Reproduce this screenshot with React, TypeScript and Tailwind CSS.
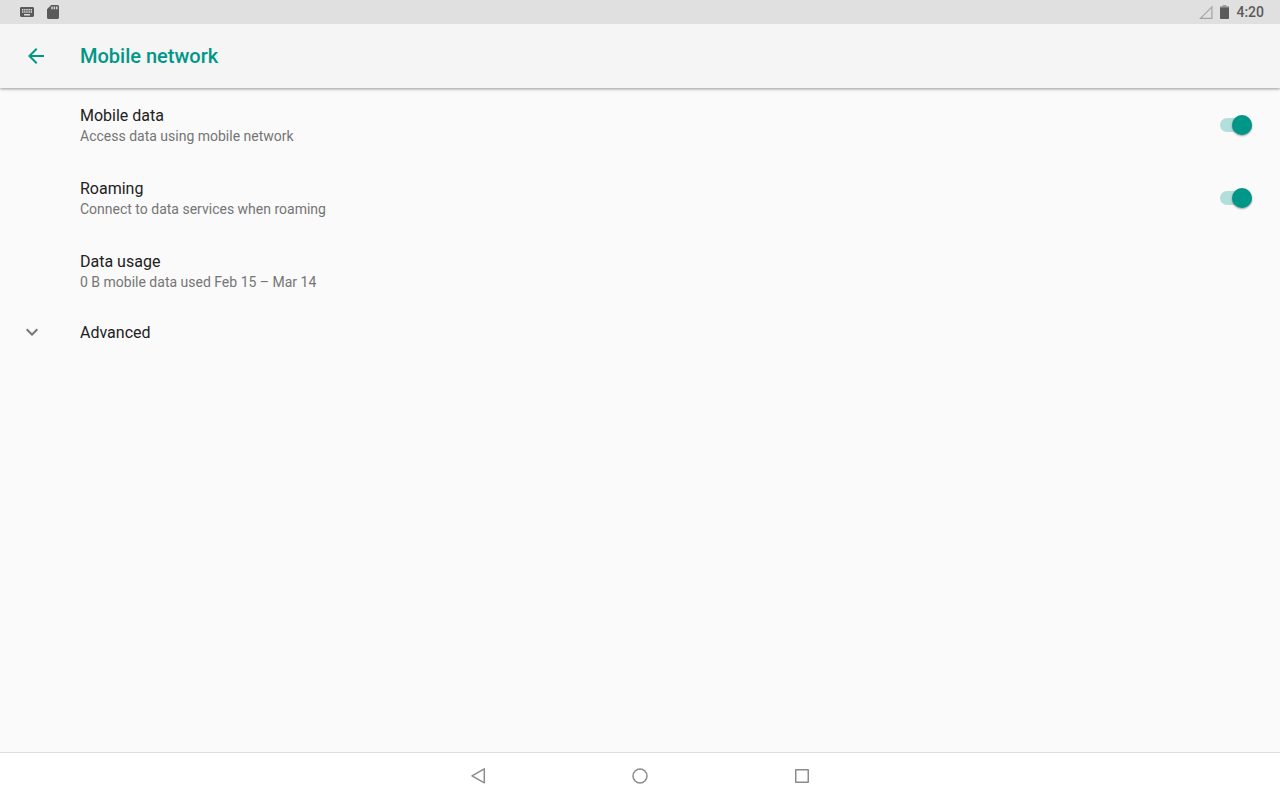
import { useState } from 'react';

interface SettingRowProps {
  title: string;
  summary: string;
}

interface SwitchRowProps extends SettingRowProps {
  id: string;
}

function StatusBar() {
  return (
    <div className="relative z-20 flex h-6 items-center justify-between bg-[#e0e0e0] pr-4 pl-5 text-[#5a5a5a]">
      <div className="flex items-center gap-3">
        <svg className="h-6 w-[14px]" viewBox="0 0 14 24" fill="currentColor" aria-hidden="true">
          <path
            fillRule="evenodd"
            d="M1.4 7h11.2c.8 0 1.4.6 1.4 1.4v7.2c0 .8-.6 1.4-1.4 1.4H1.4C.6 17 0 16.400 0 15.600V8.400C0 7.600.6 7 1.400 7zM2 9v1.500h1.400V9zM4.150 9v1.500h1.400V9zM6.300 9v1.500h1.400V9zM8.450 9v1.500h1.400V9zM10.600 9v1.500H12V9zM2 11.300v1.500h1.400v-1.500zM4.150 11.300v1.500h1.400v-1.500zM6.300 11.300v1.500h1.400v-1.500zM8.450 11.300v1.500h1.400v-1.500zM10.600 11.300v1.500H12v-1.500zM4.100 14v1.400h5.800V14z"
          />
        </svg>
        <svg className="h-6 w-[14px]" viewBox="0 0 14 24" fill="currentColor" aria-hidden="true">
          <path
            fillRule="evenodd"
            d="M5.200 5h6.300c.8 0 1.500.7 1.500 1.500v11c0 .8-.7 1.500-1.500 1.500h-9c-.8 0-1.500-.7-1.500-1.500V9.200zM5.300 6.500v2.700h1.400V6.500zM7.700 6.500v2.700h1.400V6.500zM10.100 6.500v2.700h1.400V6.500z"
          />
        </svg>
      </div>
      <div className="flex items-center gap-[7px]">
        <svg className="h-6 w-[14px]" viewBox="0 0 14 24" fill="none" stroke="#a3a3a3" strokeWidth="1.2" aria-hidden="true">
          <path d="M12.900 6.900v11.500H1.500z" />
        </svg>
        <svg className="h-6 w-[9px]" viewBox="0 0 9 24" aria-hidden="true">
          <path fill="#9a9a9a" d="M2.700 5h3.600v1.300H9V8H0V6.300h2.700z" />
          <path fill="currentColor" d="M0 7.500h9V18c0 .6-.4 1-1 1H1c-.6 0-1-.4-1-1z" />
        </svg>
        <span className="text-sm font-medium">4:20</span>
      </div>
    </div>
  );
}

function AppBar() {
  return (
    <header className="relative z-10 flex h-16 items-center gap-8 bg-[#f5f5f5] px-6 text-[#009688] shadow-[0_1px_3px_rgba(0,0,0,0.4)]">
      <button type="button" aria-label="Navigate up">
        <svg className="size-6" viewBox="0 0 24 24" fill="currentColor" aria-hidden="true">
          <path d="M20 11H7.830l5.590-5.590L12 4l-8 8 8 8 1.410-1.410L7.830 13H20v-2z" />
        </svg>
      </button>
      <h1 className="text-xl font-medium">Mobile network</h1>
    </header>
  );
}

function RowText({ title, summary }: SettingRowProps) {
  return (
    <span className="block pt-[17px] pb-[15px]">
      <span className="block text-base leading-[21px] text-[#212121]">{title}</span>
      <span className="block text-sm leading-5 text-[#757575]">{summary}</span>
    </span>
  );
}

function SwitchRow({ id, title, summary }: SwitchRowProps) {
  const [on, setOn] = useState(true);

  return (
    <li>
      <label htmlFor={id} className="flex cursor-pointer items-center justify-between pr-7 pl-20">
        <RowText title={title} summary={summary} />
        <input
          id={id}
          type="checkbox"
          role="switch"
          checked={on}
          onChange={() => setOn(!on)}
          className="peer sr-only"
        />
        <span className="flex h-[14px] w-8 items-center rounded-full bg-[#b2dfdb] peer-checked:justify-end">
          <span className="size-5 shrink-0 rounded-full bg-[#009688] shadow-[0_1px_2px_rgba(0,0,0,0.4)]" />
        </span>
      </label>
    </li>
  );
}

function LinkRow({ title, summary }: SettingRowProps) {
  return (
    <li>
      <button type="button" className="block w-full pr-7 pl-20 text-left">
        <RowText title={title} summary={summary} />
      </button>
    </li>
  );
}

function AdvancedRow() {
  return (
    <li>
      <button type="button" className="flex h-[51px] w-full items-center gap-9 pl-5 text-left">
        <svg className="size-6" viewBox="0 0 24 24" fill="#757575" aria-hidden="true">
          <path d="M16.590 7.590L12 12.170 7.410 7.590 6 9l6 6 6-6z" />
        </svg>
        <span className="text-base text-[#212121]">Advanced</span>
      </button>
    </li>
  );
}

function NavigationBar() {
  return (
    <nav className="flex h-12 items-center justify-center gap-[138px] border-t border-[#dcdcdc] bg-white pb-px">
      <button type="button" aria-label="Back">
        <svg className="size-6" viewBox="0 0 24 24" fill="none" stroke="#8c8c8c" strokeWidth="1.5" strokeLinejoin="round" aria-hidden="true">
          <path d="M18.300 4.800v14L6 11.800z" />
        </svg>
      </button>
      <button type="button" aria-label="Home">
        <svg className="size-6" viewBox="0 0 24 24" fill="none" stroke="#8c8c8c" strokeWidth="1.5" aria-hidden="true">
          <circle cx="12" cy="12" r="7" />
        </svg>
      </button>
      <button type="button" aria-label="Overview">
        <svg className="size-6" viewBox="0 0 24 24" fill="none" stroke="#8c8c8c" strokeWidth="1.5" strokeLinejoin="round" aria-hidden="true">
          <rect x="5.750" y="5.750" width="12.500" height="12.500" />
        </svg>
      </button>
    </nav>
  );
}

export default function App() {
  return (
    <div className="flex min-h-screen flex-col bg-[#fafafa] font-['Roboto',sans-serif]">
      <StatusBar />
      <AppBar />
      <main className="flex-1">
        <ul>
          <SwitchRow id="mobile-data" title="Mobile data" summary="Access data using mobile network" />
          <SwitchRow id="roaming" title="Roaming" summary="Connect to data services when roaming" />
          <LinkRow title="Data usage" summary="0 B mobile data used Feb 15 – Mar 14" />
          <AdvancedRow />
        </ul>
      </main>
      <NavigationBar />
    </div>
  );
}
